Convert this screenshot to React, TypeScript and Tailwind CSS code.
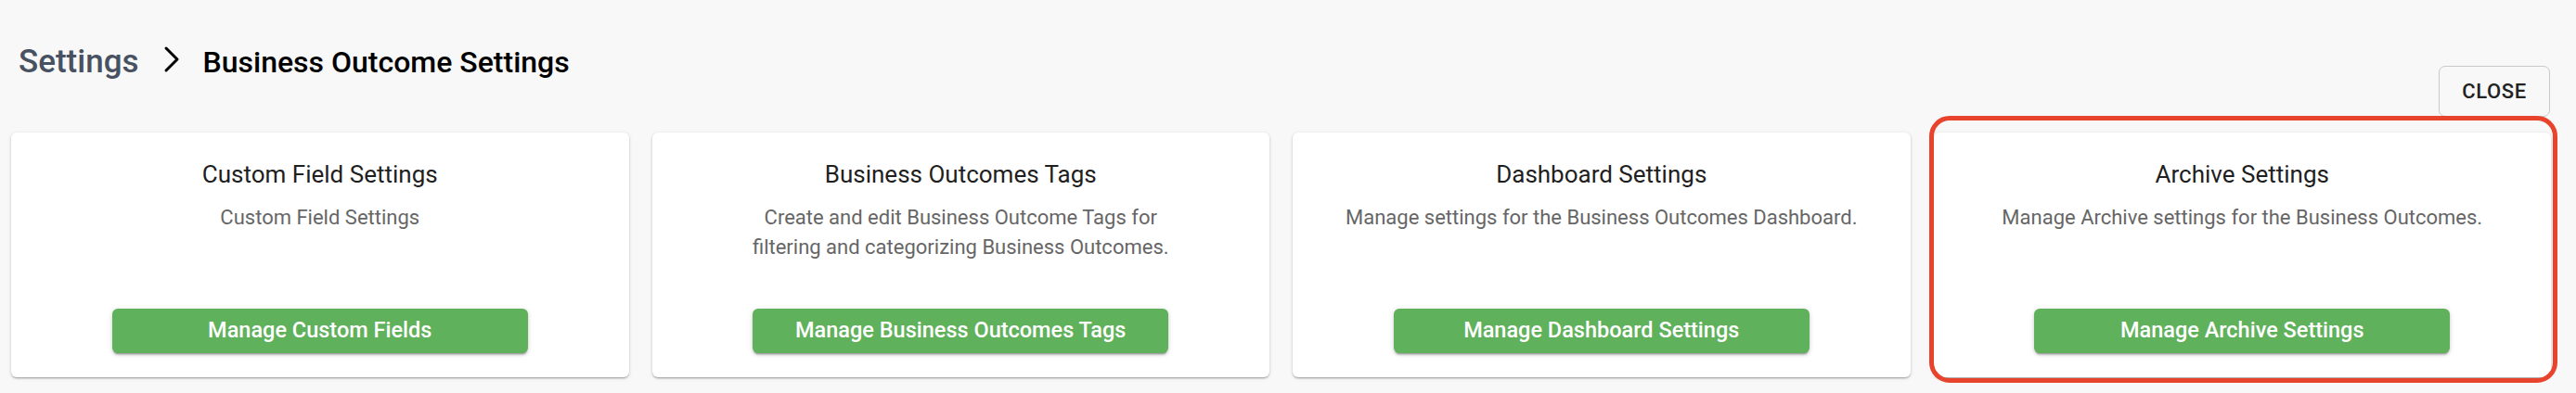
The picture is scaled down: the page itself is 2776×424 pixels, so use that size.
import { ChevronRight } from 'lucide-react';

type SettingCard = {
  title: string;
  desc: string[];
  action: string;
  highlighted?: boolean;
};

const cards: SettingCard[] = [
  {
    title: 'Custom Field Settings',
    desc: ['Custom Field Settings'],
    action: 'Manage Custom Fields',
  },
  {
    title: 'Business Outcomes Tags',
    desc: [
      'Create and edit Business Outcome Tags for',
      'filtering and categorizing Business Outcomes.',
    ],
    action: 'Manage Business Outcomes Tags',
  },
  {
    title: 'Dashboard Settings',
    desc: ['Manage settings for the Business Outcomes Dashboard.'],
    action: 'Manage Dashboard Settings',
  },
  {
    title: 'Archive Settings',
    desc: ['Manage Archive settings for the Business Outcomes.'],
    action: 'Manage Archive Settings',
    highlighted: true,
  },
];

function Card({ title, desc, action, highlighted }: SettingCard) {
  return (
    <div className="relative">
      {highlighted && (
        <div className="pointer-events-none absolute -top-[18px] -bottom-[6px] -left-[5px] -right-[7px] rounded-[22px] border-[5px] border-[#e8432c]" />
      )}
      <div className="flex h-[264px] flex-col items-center rounded-[6px] bg-white pt-[24px] pb-[26px] shadow-[0_2px_2px_-1px_rgba(0,0,0,0.2),0_1px_2px_0_rgba(0,0,0,0.14),0_1px_4px_0_rgba(0,0,0,0.12)]">
        <h3 className="text-[26px] leading-[42px] font-normal text-[#1f1f1f]">{title}</h3>
        <div className="mt-[10px] flex-1 text-center text-[22px] leading-[32px] text-[#666]">
          {desc.map((line) => (
            <p key={line}>{line}</p>
          ))}
        </div>
        <button className="h-[48px] w-[448px] rounded-[6px] bg-[#5fb15b] text-[23.5px] font-medium text-white shadow-[0_3px_2px_-2px_rgba(0,0,0,0.3),0_2px_3px_0_rgba(0,0,0,0.14),0_1px_6px_0_rgba(0,0,0,0.12)]">
          {action}
        </button>
      </div>
    </div>
  );
}

export default function App() {
  return (
    <div className="min-h-[424px] w-full bg-[#f8f8f8] font-['Roboto',sans-serif]">
      <div className="flex items-start justify-between pl-[20px] pr-[28px]">
        <nav className="mt-[43px] flex items-center leading-[48px] font-medium">
          <span className="text-[35px] text-[#475161]">Settings</span>
          <ChevronRight size={48} strokeWidth={1.5} className="mr-[10px] ml-[11px] -mt-[6px] text-black" />
          <span className="text-[32px] text-black">Business Outcome Settings</span>
        </nav>
        <button className="mt-[71px] h-[55px] w-[120px] rounded-[7px] border border-[#c9c9c9] text-[22px] font-medium tracking-[0.6px] text-[#222]">
          CLOSE
        </button>
      </div>
      <div className="mt-[17px] grid grid-cols-4 gap-[25px] pl-[12px] pr-[27px] pb-[18px]">
        {cards.map((c) => (
          <Card key={c.title} {...c} />
        ))}
      </div>
    </div>
  );
}
